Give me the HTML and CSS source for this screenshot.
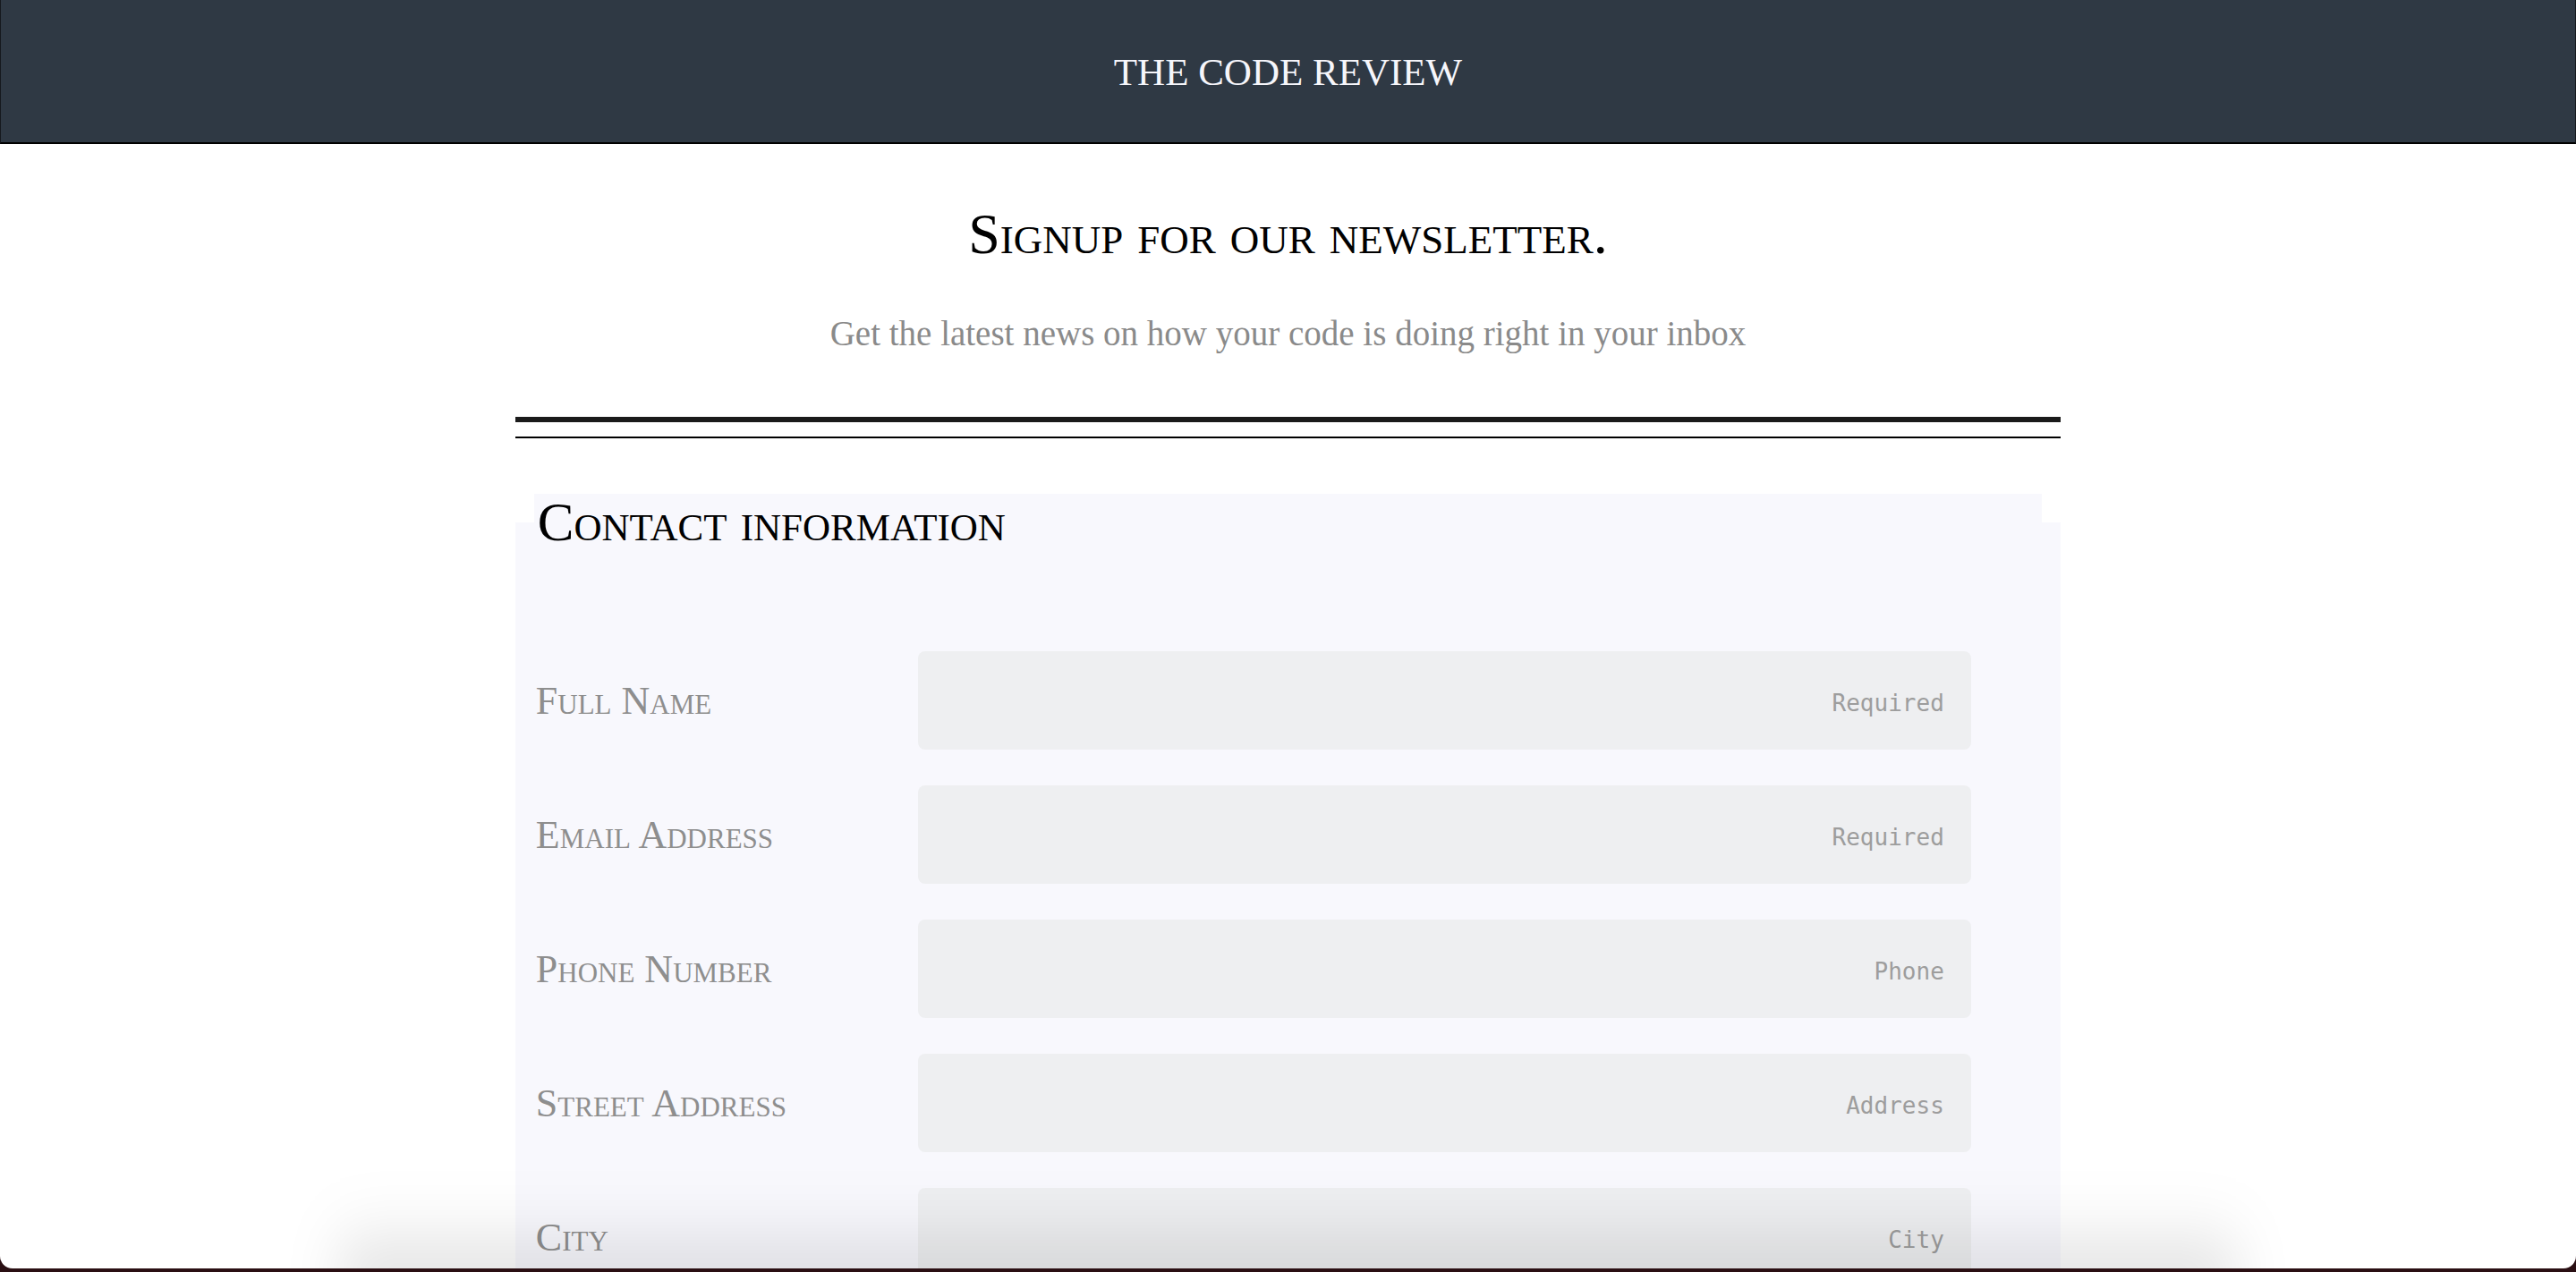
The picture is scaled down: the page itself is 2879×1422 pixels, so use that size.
FILE: index.html
```html
<!DOCTYPE html>
<html lang="en">
<head>
<meta charset="utf-8">
<title>The Code Review — Newsletter</title>
<link rel="stylesheet" href="styles.css">
</head>
<body>
<header class="masthead">
  <div class="brand">THE CODE REVIEW</div>
</header>
<main class="page">
  <h1 class="title">Signup for our newsletter.</h1>
  <p class="lede">Get the latest news on how your code is doing right in your inbox</p>
  <div class="rule-thick"></div>
  <div class="rule-thin"></div>
  <form class="signup">
    <fieldset class="group">
      <legend class="group-title">Contact information</legend>
      <div class="rows">
        <div class="row">
          <label class="field-label" for="name">Full Name</label>
          <input class="field-input" id="name" type="text" placeholder="Required">
        </div>
        <div class="row">
          <label class="field-label" for="email">Email Address</label>
          <input class="field-input" id="email" type="email" placeholder="Required">
        </div>
        <div class="row">
          <label class="field-label" for="phone">Phone Number</label>
          <input class="field-input" id="phone" type="tel" placeholder="Phone">
        </div>
        <div class="row">
          <label class="field-label" for="street">Street Address</label>
          <input class="field-input" id="street" type="text" placeholder="Address">
        </div>
        <div class="row">
          <label class="field-label" for="city">City</label>
          <input class="field-input" id="city" type="text" placeholder="City">
        </div>
      </div>
    </fieldset>
  </form>
</main>
<div class="dock-shadow"></div>
<div class="window-edge"></div>
</body>
</html>
```

FILE: styles.css
```css
html, body {
  margin: 0;
  padding: 0;
  background: #ffffff;
}
body {
  font-family: "Liberation Serif", "Times New Roman", serif;
  color: #000;
}
.masthead {
  height: 159px;
  background: #2f3944;
  border-left: 1px solid #15191e;
  border-right: 1px solid #15191e;
  border-bottom: 2px solid #000;
  display: flex;
  align-items: center;
  justify-content: center;
}
.brand {
  font-family: "Liberation Serif", serif;
  font-size: 43px;
  line-height: 1;
  color: #f6f6fb;
  letter-spacing: 0;
  padding-top: 2px;
}
.page {
  width: 60%;
  margin: 0 auto;
  display: flex;
  flex-direction: column;
}
.title {
  margin: 62px 0 0;
  font-weight: normal;
  font-size: 64px;
  line-height: 77px;
  font-variant: small-caps;
  text-align: center;
  color: #000;
}
.lede {
  margin: 49px 0 0;
  font-size: 39px;
  line-height: 47px;
  text-align: center;
  color: #8a8a8a;
}
.rule-thick {
  margin-top: 70px;
  height: 6px;
  background: #1b1b1b;
}
.rule-thin {
  margin-top: 16px;
  height: 2px;
  background: #000;
}
.signup {
  margin: 62px 0 0;
}
.group {
  margin: 0;
  padding: 112px 21px 60px;
  border: 0;
  min-width: 0;
  background: #f8f8fd;
}
.group-title {
  box-sizing: border-box;
  width: 100%;
  height: 64px;
  padding: 0 4px;
  font-size: 61px;
  line-height: 64px;
  font-variant: small-caps;
  color: #000;
  background: #f8f8fd;
}
.rows {
  display: flex;
  flex-direction: column;
  gap: 40px;
}
.row {
  display: grid;
  grid-template-columns: 429px 1177px;
  align-items: center;
}
.field-label {
  padding-left: 2px;
  font-size: 44px;
  font-variant: small-caps;
  color: #8e8e8e;
}
.field-input {
  box-sizing: border-box;
  height: 110px;
  width: 100%;
  margin: 0;
  border: 0;
  border-radius: 8px;
  background: #eeeff1;
  padding: 6px 30px 0 30px;
  font-family: "DejaVu Sans Mono", "Liberation Mono", monospace;
  font-size: 26px;
  text-align: right;
  color: #333;
  outline: none;
}
.field-input::placeholder {
  color: #9d9d9d;
}
.dock-shadow {
  position: fixed;
  left: 380px;
  right: 380px;
  bottom: -30px;
  height: 110px;
  background: linear-gradient(to bottom, rgba(0,0,0,0) 0%, rgba(0,0,0,0.06) 45%, rgba(0,0,0,0.16) 100%);
  filter: blur(30px);
  pointer-events: none;
}
.window-edge {
  position: fixed;
  left: 0;
  right: 0;
  bottom: 0;
  height: 40px;
  overflow: hidden;
  pointer-events: none;
}
.window-edge::before {
  content: "";
  position: absolute;
  left: 0;
  right: 0;
  top: -30px;
  bottom: 4px;
  border-radius: 0 0 14px 14px;
  box-shadow: 0 0 0 60px #2a0f13;
}
```
